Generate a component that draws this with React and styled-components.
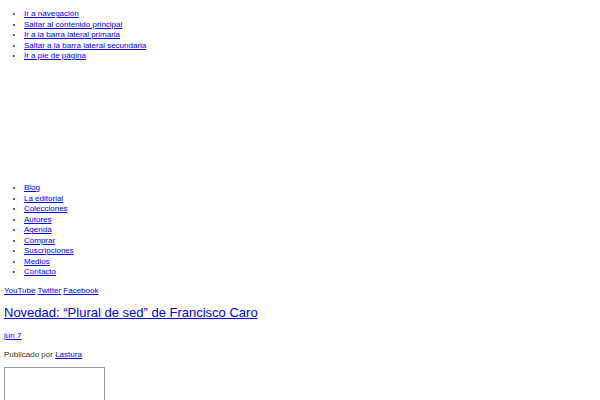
import styled, {createGlobalStyle} from 'styled-components'

const Global = createGlobalStyle`
    body {
        margin: 0;
        padding: 0 4px;
        background: #ffffff;
        font-family: "Liberation Sans", Arial, sans-serif;
        font-size: 8px;
        line-height: 10.5px;
        color: #333333;
    }
    a { color: #0000ee; }
`;

const saltos = [
    'Ir a navegación',
    'Saltar al contenido principal',
    'Ir a la barra lateral primaria',
    'Saltar a la barra lateral secundaria',
    'Ir a pie de página',
]

const menu = ['Blog','La editorial','Colecciones','Autores','Agenda','Comprar','Suscripciones','Medios','Contacto']

const redes = ['YouTube','Twitter','Facebook']

const App = () => {
    return (
        <>
            <Global />
            <Lista arriba={9}>
                {saltos.map(s => <li key={s}><a href="#">{s}</a></li>)}
            </Lista>

            {/* cabecera vacia: el logo no carga */}
            <Cabecera />

            <Lista arriba={0}>
                {menu.map(m => <li key={m}><a href="#">{m}</a></li>)}
            </Lista>

            <Redes>
                {redes.map((r, i) => <span key={r}>{i > 0 && ' '}<a href="#">{r}</a></span>)}
            </Redes>

            <Titulo><a href="#">Novedad: “Plural de sed” de Francisco Caro</a></Titulo>

            <Fecha><a href="#">jun 7</a></Fecha>

            <Autor>Publicado por <a href="#">Lastura</a></Autor>

            <Imagen />
        </>
    );
}

// styled-components

const Lista = styled.ul`
    margin: ${props => props.arriba}px 0 0;
    padding-left: 20px;
    list-style: disc;
`;

const Cabecera = styled.div`
    height: 121.5px;
`;

const Redes = styled.div`
    margin-top: 8.5px;
`;

const Titulo = styled.h2`
    margin: 8px 0 0;
    font-size: 13px;
    font-weight: normal;
    line-height: 15px;
`;

const Fecha = styled.p`
    margin: 11px 0 0;
`;

const Autor = styled.p`
    margin: 9px 0 0;
`;

const Imagen = styled.div`
    margin-top: 6px;
    width: 99px;
    height: 100px;
    border: 1px solid #999999;
`;

export default App;
